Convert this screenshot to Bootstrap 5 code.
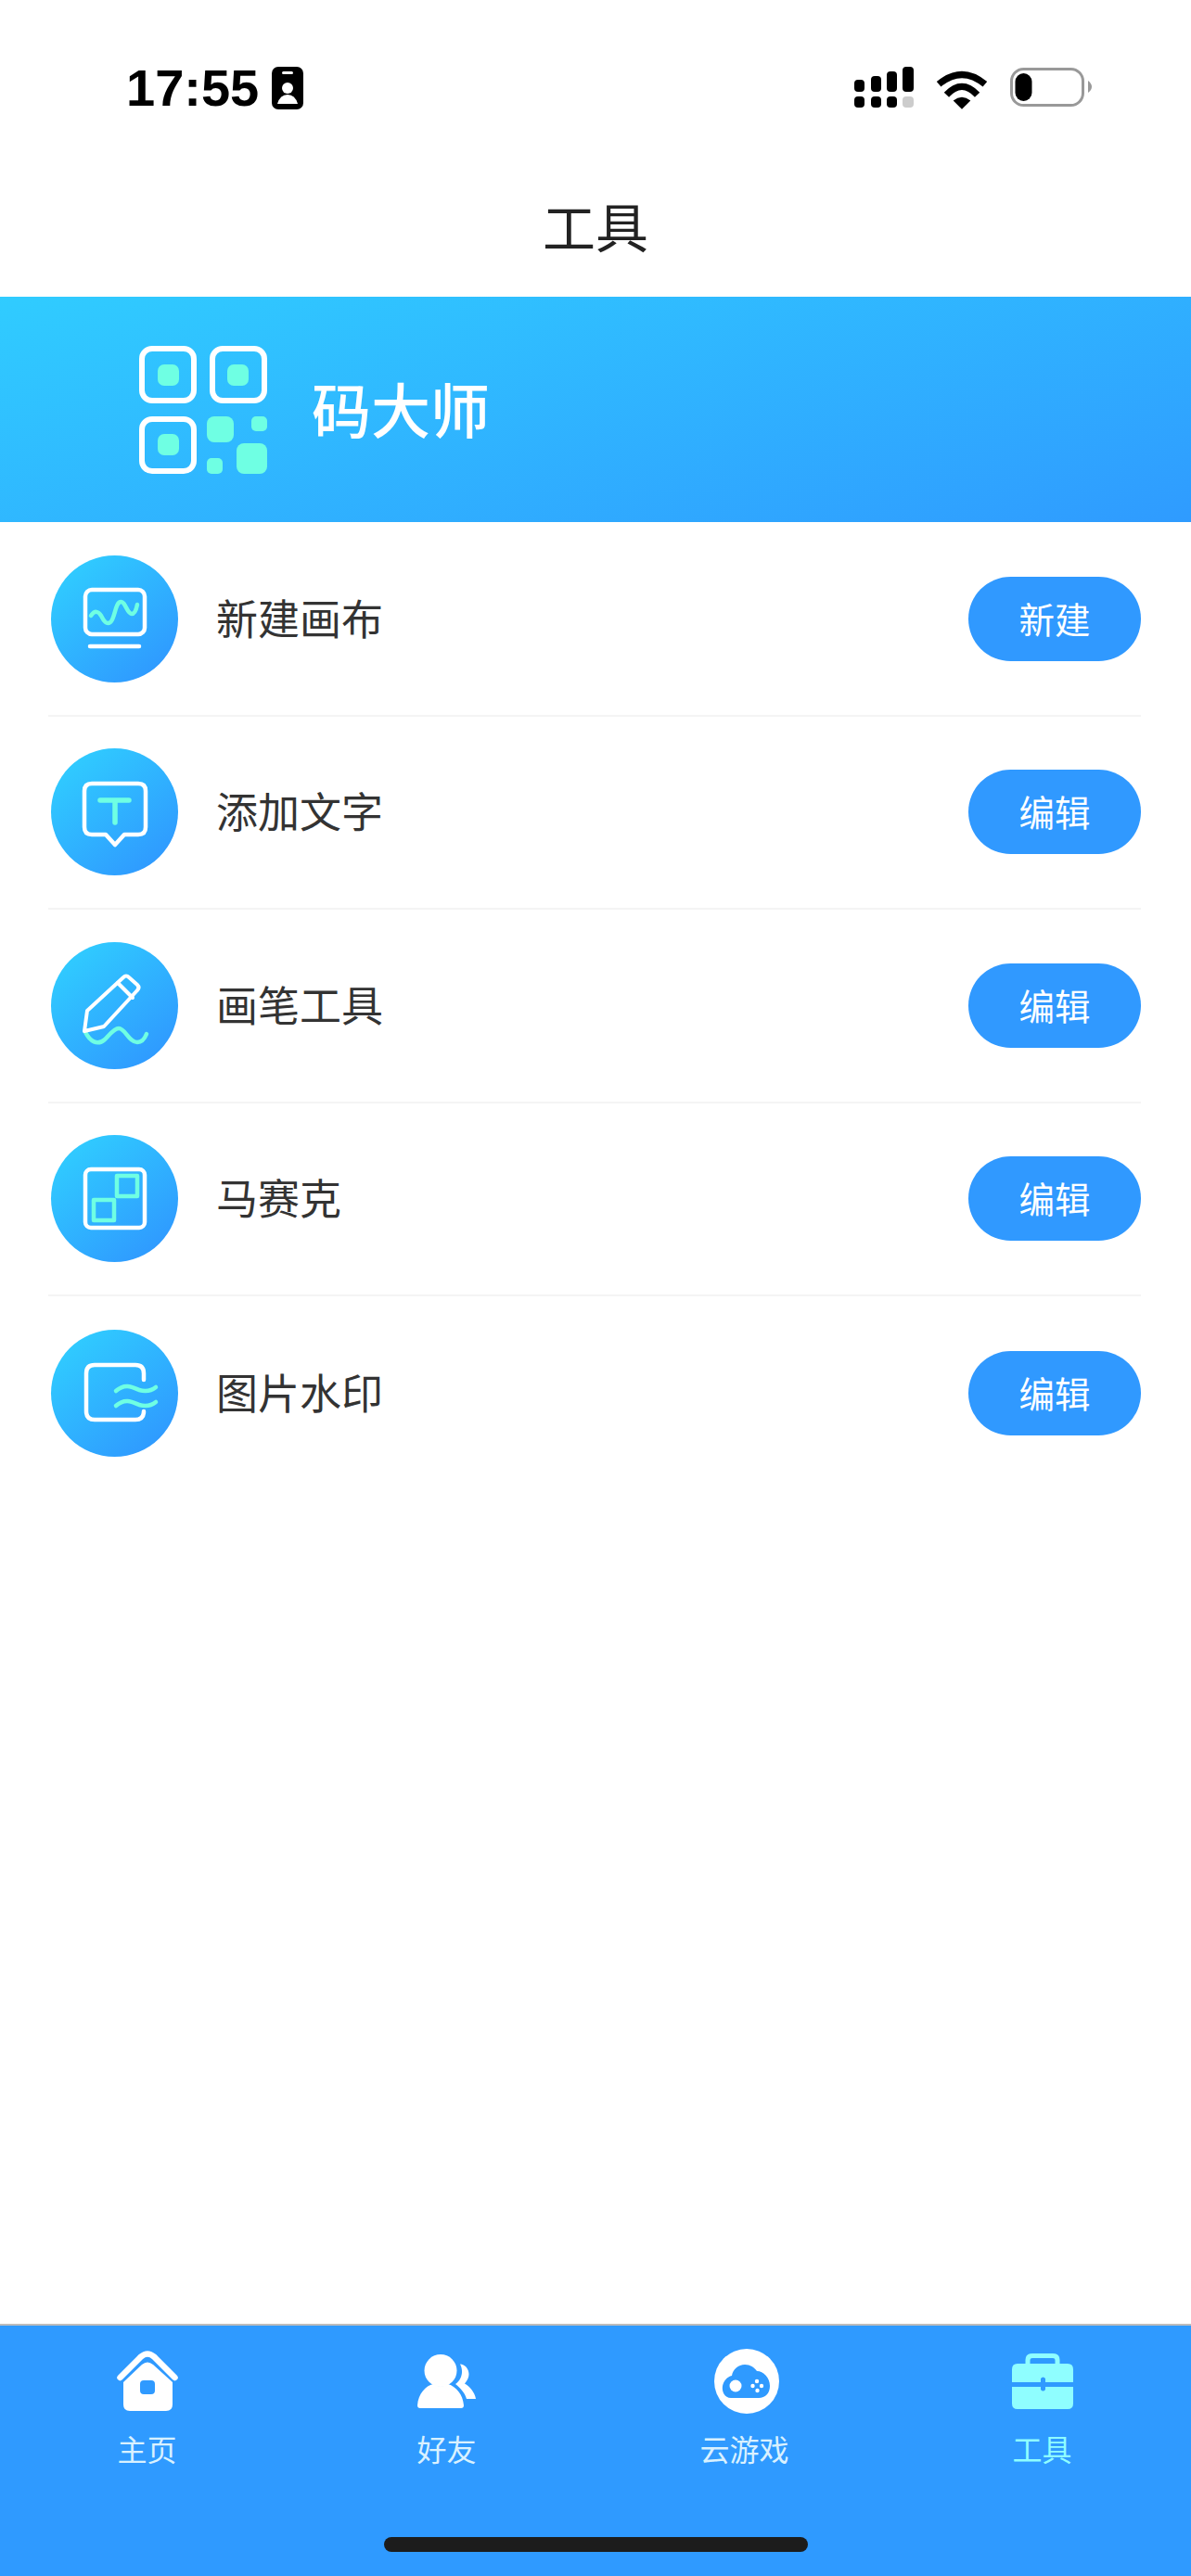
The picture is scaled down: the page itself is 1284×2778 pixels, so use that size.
<!DOCTYPE html>
<html lang="zh-CN">

<head>
    <meta charset="UTF-8">
    <meta name="viewport" content="width=device-width, initial-scale=1.0">
    <title>工具</title>
    <link href="https://cdn.jsdelivr.net/npm/bootstrap@5.3.2/dist/css/bootstrap.min.css" rel="stylesheet">
    <style>
        body {
            font-family: "Noto Sans CJK SC", "Liberation Sans", sans-serif;
            background-color: #fff;
        }

        .app-page {
            height: 2778px;
            overflow: hidden;
        }

        .status-area {
            height: 174px;
            padding: 72px 107px 0 136px;
        }

        .clock {
            font-family: "Liberation Sans", sans-serif;
            font-weight: 700;
            font-size: 56px;
            line-height: 46px;
            color: #000;
            width: 157px;
        }

        .status-icons {
            gap: 24px;
        }

        .batt-icon {
            margin-top: 1px;
        }

        .page-title {
            height: 146px;
            font-size: 57px;
            line-height: 136px;
            color: #222;
            margin: 0;
            font-weight: 400;
        }

        .qr-banner {
            height: 243px;
            padding-left: 150px;
            gap: 48px;
            background: linear-gradient(165deg, #30ccff 0%, #2f9bff 100%);
        }

        .qr-name {
            color: #fff;
            font-size: 64px;
            font-weight: 500;
            line-height: 1;
            margin-bottom: 6px;
        }

        .tool-list {
            margin: 1px 54px 0 52px;
            --bs-list-group-border-color: #f4f4f4;
            --bs-list-group-border-width: 2px;
        }

        .tool-row {
            height: 208.5px;
            padding: 0 0 0 3px;
            gap: 41px;
        }

        .tool-round {
            width: 137px;
            height: 137px;
            flex-shrink: 0;
            background: linear-gradient(140deg, #30ceff 8%, #2f97ff 92%);
        }

        .tool-name {
            font-size: 45px;
            color: #333;
            line-height: 1;
            margin-bottom: 4px;
        }

        .tool-btn {
            width: 186px;
            height: 91px;
            padding: 0 0 3px;
            margin-left: auto;
            font-size: 38.500px;
            line-height: 88px;
            color: #fff;
            background-color: #3099ff;
            border: 0;
        }

        .tab-bar {
            height: 272px;
            background-color: #2f9aff;
            border-top: 2px solid #bcbcbc;
            padding-top: 25px;
        }

        .tab-icon {
            height: 70px;
        }

        .tab-label {
            font-size: 32px;
            line-height: 40px;
            margin-top: 17px;
            color: #d9f1ff;
        }

        .tab-on {
            color: #8ffeff;
        }

        .home-bar {
            width: 457px;
            height: 16px;
            background-color: #1c1c1c;
            margin-bottom: 26px;
        }
    </style>
</head>

<body>
    <div class="app-page d-flex flex-column">
        <!-- status bar -->
        <div class="status-area d-flex justify-content-between align-items-start">
            <div class="d-flex">
                <span class="clock">17:55</span>
                <svg width="34" height="46" viewBox="0 0 34 46">
                    <rect width="34" height="46" rx="7" fill="#000" />
                    <rect x="11" y="5" width="12" height="3" rx="1.5" fill="#fff" />
                    <circle cx="17" cy="23" r="6" fill="#fff" />
                    <path d="M6 40Q9 30 17 30Q25 30 28 40Z" fill="#fff" />
                </svg>
            </div>
            <div class="status-icons d-flex align-items-start">
                <svg width="64" height="44" viewBox="0 0 64 44">
                    <rect x="0" y="14" width="11" height="13" rx="4" />
                    <rect x="18" y="10" width="11" height="17" rx="4" />
                    <rect x="35" y="5" width="11" height="22" rx="4" />
                    <rect x="52" y="0" width="12" height="27" rx="4" />
                    <rect x="0" y="32" width="11" height="12" rx="4" />
                    <rect x="18" y="32" width="11" height="12" rx="4" />
                    <rect x="35" y="32" width="11" height="12" rx="4" />
                    <rect x="52" y="32" width="12" height="12" rx="4" fill="#ccc" />
                </svg>
                <svg width="56" height="42" viewBox="0 0 54 40" class="mt-1" fill="none" stroke="#000">
                    <path d="M3 14Q27-6 51 14" stroke-width="7" />
                    <path d="M11 25Q27 8 43 25" stroke-width="7" />
                    <path d="M18 31Q27 24 36 31L27 40Z" fill="#000" stroke="none" />
                </svg>
                <svg width="88" height="42" viewBox="0 0 88 42" class="batt-icon">
                    <rect x="1.5" y="1.5" width="77" height="39" rx="13" fill="none" stroke="#999" stroke-width="3" />
                    <rect x="5.500" y="6" width="18" height="30" rx="9" />
                    <path d="M84 14Q88 17 88 20.500Q88 24 84 27Z" fill="#999" />
                </svg>
            </div>
        </div>

        <h1 class="page-title text-center">工具</h1>

        <!-- banner -->
        <div class="qr-banner d-flex align-items-center">
            <svg width="138" height="138" viewBox="0 0 138 138">
                <g fill="none" stroke="#fff" stroke-width="6">
                    <rect x="3" y="3" width="56" height="56" rx="11" />
                    <rect x="79" y="3" width="56" height="56" rx="11" />
                    <rect x="3" y="79" width="56" height="56" rx="11" />
                </g>
                <g fill="#6fffe3">
                    <rect x="20" y="20" width="23" height="23" rx="7" />
                    <rect x="95" y="20" width="23" height="23" rx="7" />
                    <rect x="20" y="95" width="23" height="23" rx="7" />
                    <rect x="73" y="76" width="29" height="28" rx="8" />
                    <rect x="121" y="76" width="17" height="16" rx="5" />
                    <rect x="105" y="105" width="33" height="33" rx="8" />
                    <rect x="73" y="121" width="17" height="17" rx="5" />
                </g>
            </svg>
            <span class="qr-name">码大师</span>
        </div>

        <!-- tool rows -->
        <div class="tool-list list-group list-group-flush">
            <div class="tool-row list-group-item d-flex align-items-center">
                <div class="tool-round rounded-circle">
                    <svg width="137" height="137" viewBox="0 0 137 137" fill="none" stroke-linecap="round" stroke-linejoin="round">
                        <rect x="37" y="37" width="64" height="48" rx="7" stroke="#fff" stroke-width="4.500" />
                        <path d="M42 98H95" stroke="#fff" stroke-width="4.500" />
                        <path d="M43 65C47 59 51 60 54 65C57 71 60 75 64 72C69 68 69 51 75 50C80 49 82 63 87 63C90 63 92 58 93 53" stroke="#6fffe3" stroke-width="4.500" />
                    </svg>
                </div>
                <span class="tool-name">新建画布</span>
                <button type="button" class="tool-btn btn rounded-pill">新建</button>
            </div>
            <div class="tool-row list-group-item d-flex align-items-center">
                <div class="tool-round rounded-circle">
                    <svg width="137" height="137" viewBox="0 0 137 137" fill="none" stroke-linecap="round" stroke-linejoin="round">
                        <path d="M44 38H94Q102 38 102 46V85Q102 93 94 93H79L69 104L59 93H44Q36 93 36 85V46Q36 38 44 38Z" stroke="#fff" stroke-width="4.500" />
                        <path d="M53 56H84M69 56V80" stroke="#6fffe3" stroke-width="5.500" />
                    </svg>
                </div>
                <span class="tool-name">添加文字</span>
                <button type="button" class="tool-btn btn rounded-pill">编辑</button>
            </div>
            <div class="tool-row list-group-item d-flex align-items-center">
                <div class="tool-round rounded-circle">
                    <svg width="137" height="137" viewBox="0 0 137 137" fill="none" stroke-linecap="round" stroke-linejoin="round">
                        <path d="M37 97C42 107 50 112 58 105C63 100 68 93 73 93C80 93 84 108 93 108C98 108 101 104 103 99" stroke="#6fffe3" stroke-width="4.500" />
                        <path d="M36 96L39 74L78 38Q81 35 84 38L93 46Q96 49 93 52L57 91Z" stroke="#fff" stroke-width="4" />
                        <path d="M72 44L88 60" stroke="#fff" stroke-width="4" />
                    </svg>
                </div>
                <span class="tool-name">画笔工具</span>
                <button type="button" class="tool-btn btn rounded-pill">编辑</button>
            </div>
            <div class="tool-row list-group-item d-flex align-items-center">
                <div class="tool-round rounded-circle">
                    <svg width="137" height="137" viewBox="0 0 137 137" fill="none" stroke-linejoin="round">
                        <rect x="37" y="37" width="64" height="63" rx="6" stroke="#fff" stroke-width="4.500" />
                        <rect x="71" y="44" width="22" height="22" stroke="#6fffe3" stroke-width="4.500" />
                        <rect x="46" y="70" width="22" height="22" stroke="#6fffe3" stroke-width="4.500" />
                    </svg>
                </div>
                <span class="tool-name">马赛克</span>
                <button type="button" class="tool-btn btn rounded-pill">编辑</button>
            </div>
            <div class="tool-row list-group-item d-flex align-items-center">
                <div class="tool-round rounded-circle">
                    <svg width="137" height="137" viewBox="0 0 137 137" fill="none" stroke-linecap="round" stroke-linejoin="round">
                        <path d="M100 54V47Q100 38 91 38H47Q38 38 38 47V88Q38 97 47 97H91Q100 97 100 88" stroke="#fff" stroke-width="4.500" />
                        <path d="M70 66C80 57 88 62 95 65C102 67 108 66 113 62" stroke="#6fffe3" stroke-width="4.500" />
                        <path d="M70 82C80 73 88 78 95 81C102 83 108 82 113 78" stroke="#6fffe3" stroke-width="4.500" />
                    </svg>
                </div>
                <span class="tool-name">图片水印</span>
                <button type="button" class="tool-btn btn rounded-pill">编辑</button>
            </div>
        </div>

        <!-- bottom tabs -->
        <div class="tab-bar mt-auto d-flex flex-column">
            <div class="row g-0 text-center">
                <div class="col-3 pe-1">
                    <div class="tab-icon d-flex align-items-center justify-content-center">
                        <svg width="66" height="66" viewBox="0 0 66 66">
                            <path d="M3.500 29L26 6.500Q33 0.500 40 6.500L62.500 29" fill="none" stroke="#fff" stroke-width="6.500" stroke-linecap="round" />
                            <path fill-rule="evenodd" fill="#fff" d="M7 34L27 15Q33 10 39 15L60 34V58Q60 65 53 65H14Q7 65 7 58ZM29 32Q25 32 25 36V43Q25 47 29 47H37Q41 47 41 43V36Q41 32 37 32Z" />
                        </svg>
                    </div>
                    <div class="tab-label">主页</div>
                </div>
                <div class="col-3">
                    <div class="tab-icon d-flex align-items-center justify-content-center">
                        <svg width="63" height="59" viewBox="0 0 63 59" fill="#fff">
                            <circle cx="25" cy="17.500" r="17.500" />
                            <path d="M0 55C1 42 9 34 17 32Q25 37 33 32C42 35 49 43 50 55Q50 58 47 58H3Q0 58 0 55Z" />
                            <path d="M46 10.500C54 11 60 22 51 31.500C56 34 62 41 63 48H53C51 41 46 36 41 32C48 27 50 18 46 10.500Z" />
                        </svg>
                    </div>
                    <div class="tab-label">好友</div>
                </div>
                <div class="col-3">
                    <div class="tab-icon d-flex align-items-center justify-content-center ps-1">
                        <svg width="70" height="70" viewBox="0 0 70 70">
                            <circle cx="35" cy="35" r="35" fill="#fff" />
                            <path fill="#2f9aff" d="M18 53C11 53 8 46 9 40C10 35 14 30 19 29C20 22 26 17 33 17C39 17 43 20 46 24C53 24 60 31 60 40C60 48 55 53 48 53Z" />
                            <g fill="#fff">
                                <circle cx="23" cy="40" r="6.500" />
                                <circle cx="46" cy="35" r="2.200" />
                                <circle cx="41.500" cy="40" r="2.200" />
                                <circle cx="51" cy="40" r="2.200" />
                                <circle cx="46.500" cy="45" r="2.200" />
                            </g>
                        </svg>
                    </div>
                    <div class="tab-label">云游戏</div>
                </div>
                <div class="col-3">
                    <div class="tab-icon d-flex align-items-center justify-content-center">
                        <svg width="66" height="60" viewBox="0 0 66 60">
                            <path d="M17 13V7Q17 2.500 22 2.500H44Q49 2.500 49 7V13" fill="none" stroke="#8ffeff" stroke-width="5" />
                            <path fill="#8ffeff" d="M6 11H60Q66 11 66 17V31H36V27Q33.500 24 31 27V31H0V17Q0 11 6 11Z" />
                            <path fill="#8ffeff" d="M0 36H31V39Q33.500 42 36 39V36H66V54Q66 60 60 60H6Q0 60 0 54Z" />
                        </svg>
                    </div>
                    <div class="tab-label tab-on">工具</div>
                </div>
            </div>
            <div class="home-bar rounded-pill mt-auto mx-auto"></div>
        </div>
    </div>

    <script src="https://cdn.jsdelivr.net/npm/bootstrap@5.3.2/dist/js/bootstrap.bundle.min.js"></script>
</body>

</html>
